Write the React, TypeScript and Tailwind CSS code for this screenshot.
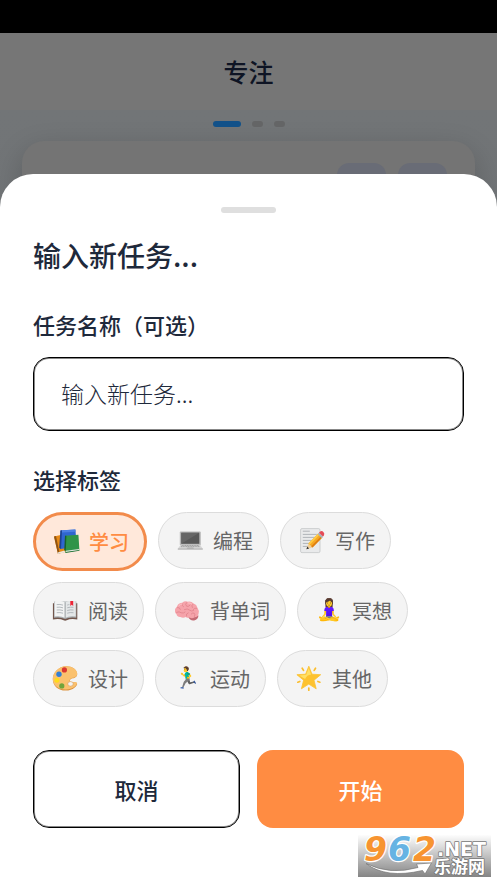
import React, { useState } from "react";

const BooksIcon = () => (
  <svg viewBox="0 0 27 27" className="size-[27px]" aria-hidden="true">
    <path d="M1 8.5 7.5 7l6 16.5L5 26z" fill="#e88a16" />
    <path d="M1 8.5 5 26l1.6-.6L3 8z" fill="#8f5312" />
    <path d="m4.6 24.4 7-1.8.4 1.6-7 1.8z" fill="#ece7de" />
    <path d="m7.4 2.4 15-.8 1.4 17L7.6 21z" fill="#2f66cf" />
    <path d="M7.4 2.4 9 2.3l-1 18.6-1.8-1z" fill="#1c418f" />
    <path d="m9 2.3 13.4-.7.2 2.2L9 4.6z" fill="#4c80e2" />
    <path d="m12 7.8 13.4-1 1 15.4-14 2z" fill="#2f9448" />
    <path d="m12 7.8 1.4-.1-.6 15.4-1.6-.9z" fill="#17602a" />
    <path d="m12.8 22.7 13.4-1.7.2 1.4-13.6 2.2z" fill="#e5e9e2" />
    <path d="m12.4 24 14-2.1v.8l-14 2.4z" fill="#1d7032" />
  </svg>
);

const LaptopIcon = () => (
  <svg viewBox="0 0 27 27" className="size-[27px]" aria-hidden="true">
    <rect x="2.8" y="4.4" width="21" height="14" rx="1" fill="#b7b7b7" />
    <rect x="4.3" y="5.8" width="18" height="11" fill="#585858" />
    <path d="M4.3 16.8V5.8h18z" fill="#666" />
    <path d="M3.6 17.8H23l2.8 4H.8z" fill="#d6d6d6" />
    <path d="M4.6 18.5h17.5M3.9 19.6h19" stroke="#8d8d8d" strokeWidth=".7" strokeDasharray="1.3 .4" />
    <path d="M10.4 20.4h6l.5 1.2H9.8z" fill="#aaa" />
    <path d="M.8 21.7h25v.7H.8z" fill="#858585" />
  </svg>
);

const MemoIcon = () => (
  <svg viewBox="0 0 27 27" className="size-[27px]" aria-hidden="true">
    <rect x="1.6" y="1.6" width="19.4" height="24" rx="1.4" fill="#e9eaeb" stroke="#c3c5c7" strokeWidth=".8" />
    <path d="M3.8 4.2h7M3.8 7.4h14M3.8 10.4h14M3.8 13.4h13M3.8 16.4h10M3.8 19.4h5" stroke="#a9aeb2" strokeWidth=".9" />
    <path d="m7.4 22.2 2-5.8 4.1 4.2z" fill="#f1cf9a" />
    <path d="m7.4 22.2.9-2.6 1.8 1.8z" fill="#333" />
    <path d="m9.4 16.4 9.8-9.9 4.1 4.1-9.8 10z" fill="#f7a823" />
    <path d="m9.4 16.4 9.8-9.9 1.3 1.3-9.8 10z" fill="#ffca43" />
    <path d="m12.2 19.3 9.8-10 1.3 1.3-9.8 10z" fill="#df7f12" />
    <path d="m18.6 7.1 1.4-1.4 4.1 4.1-1.4 1.4z" fill="#a6b4ba" />
    <path d="m20 5.7.9-.9q1.8-1.6 3.5.2t.4 3.7l-.9.9z" fill="#e54b57" />
  </svg>
);

const OpenBookIcon = () => (
  <svg viewBox="0 0 27 27" className="size-[27px]" aria-hidden="true">
    <path d="M.9 6.2h24.4v16.2q-7-1-10.5.8-1.7.9-3.2 0Q8 21.4.9 22.4z" fill="#72564c" />
    <path d="M2 4.5h22.3v16.2q-7-1-11.2 1.3Q9 19.7 2 20.7z" fill="#a8adb0" />
    <path d="M13.1 5.4Q9 3 2.6 4.2v15.3q6.5-1 10.5 1.6z" fill="#f2f3f3" />
    <path d="M13.1 5.4Q17 3 23.7 4.2v15.3q-6.5-1-10.6 1.6z" fill="#e4e7e8" />
    <path d="M13.1 5.4v15.8" stroke="#9a9fa2" strokeWidth="1" />
    <path d="M4.7 7.6q3.3-.5 6.3.5M4.7 10.3q3.3-.5 6.3.5M4.7 13q3.3-.5 6.3.5M4.7 15.7q3.3-.5 6.3.5M15.2 8.1q1.4-.5 2.2-.6M15.2 10.8q3-1 6.3-.5M15.2 13.5q3-1 6.3-.5M15.2 16.2q3-1 6.3-.5" fill="none" stroke="#a4abb0" strokeWidth=".8" />
    <path d="M18.3 4h2.9v5l-1.4-1.2-1.5 1.2z" fill="#ee2435" />
  </svg>
);

const BrainIcon = () => (
  <svg viewBox="0 0 27 27" className="size-[27px]" aria-hidden="true">
    <path d="M14 19.5q2 4.6 6.2 3.9 4-.6 4.3-4.8z" fill="#c46a74" />
    <path d="M1 14.5q-.4-3.2 2-5.1Q4.4 5.8 8.2 5.7q2.6-2 5.6-1 3.6-.6 5.8 1.9 3.2.9 3.9 4.3 2.1 2.7 1.1 5.6-.5 3.5-3.9 3.8-2.6 1.8-5.2.3-1.9.7-3.7-.7-2.6 1.5-5.4.1-3.2.2-3.9-2.7Q1 16.2 1 14.5z" fill="#f5a3aa" />
    <g fill="none" stroke="#df818a" strokeWidth=".8" strokeLinecap="round">
      <path d="M3.5 10.5q2.4-.5 2.9 2M8.2 6.5q-.8 2.4 1.3 3.3M12.5 5.6q-1.9 1.8.3 3.8 2.2.3 3.2-1.2M18.8 7.3q-1.9 1.2-.5 3.2M22.8 11.2q-2.5-.6-3.5 1.2M10.5 12.5q3-1.5 5.2.7 1.9 1.6 3.9.3M2.6 15.3q2.8-1.3 4.6.5 2.3.8 3.9-.7M12.4 19q-.7-2.5 1.8-3.2M20.5 19.5q1.2-2-.4-3.4-1.9-.4-2.9.9" />
    </g>
    <path d="M5 8.5q1.3-1.6 3-1.6M14.2 5.9q2.3-.2 3.4.9" fill="none" stroke="#ffc9cb" strokeWidth=".9" strokeLinecap="round" />
  </svg>
);

const PaletteIcon = () => (
  <svg viewBox="0 0 27 27" className="size-[27px]" aria-hidden="true">
    <path d="M14.5 1.2c5.5.1 10.3 3 10.7 7.5.2 3-2.3 4.2-4.3 4.6-2.6.5-3.8 2.3-2.4 3.6 1.9 1.3 5.3-.6 6.5 1.3 1.2 2.2-4.3 7.5-11.3 7.4C6.2 25.5.8 20.8.8 14.2S7 1.1 14.5 1.2z" fill="#db9340" />
    <path d="M14.5 1.2c5.5.1 10.3 3 10.7 7 .2 3-2.3 4.2-4.3 4.6-2.6.5-4.2 2.5-2.8 4.2 1.9 1.3 5.7-.9 6.7.8 1.2 2-4.3 6.9-11.1 6.8C6.2 24.5.8 20.1.8 13.8S7 1.1 14.5 1.2z" fill="#fac16e" />
    <ellipse cx="18.5" cy="18.9" rx="2.8" ry="2.3" fill="#f3f3f3" stroke="#d9923f" strokeWidth=".6" />
    <circle cx="12.4" cy="4.9" r="2.6" fill="#db3730" />
    <circle cx="7" cy="9.2" r="2.7" fill="#347ed2" />
    <circle cx="4.9" cy="15.3" r="2.5" fill="#ffdc1a" />
    <circle cx="9.8" cy="20.9" r="2.6" fill="#71a43b" />
  </svg>
);

const StarIcon = () => (
  <svg viewBox="0 0 27 27" className="size-[27px]" aria-hidden="true">
    <path d="m12.8 1.2 3.2 8 8.7.5-6.7 5.5 2.2 8.6-7.4-4.7-7.4 4.7 2.2-8.6L.9 9.7l8.7-.5z" fill="#fdc22f" stroke="#fdc22f" strokeWidth=".8" strokeLinejoin="round" />
    <path d="m12.8 3 2.3 6.6q-4.3.4-6 4.5L3.2 10.4l7-.6z" fill="#ffe066" />
    <g stroke="#fbbd2c" strokeWidth="1.7" strokeLinecap="round">
      <path d="m6.2 3.2 1.3 2.2M19.5 3.2l-1.3 2.2M1.8 17.2l2-.7M23.9 17.2l-2-.7M12.8 23v2.2" />
    </g>
  </svg>
);

const emojiStyle = "flex size-[27px] items-center justify-center font-['Noto_Color_Emoji',sans-serif] text-[21px] leading-none";

const TAGS: { name: string; icon: React.ReactNode }[] = [
  { name: "学习", icon: <BooksIcon /> },
  { name: "编程", icon: <LaptopIcon /> },
  { name: "写作", icon: <MemoIcon /> },
  { name: "阅读", icon: <OpenBookIcon /> },
  { name: "背单词", icon: <BrainIcon /> },
  { name: "冥想", icon: <span className={emojiStyle}>🧘‍♀️</span> },
  { name: "设计", icon: <PaletteIcon /> },
  { name: "运动", icon: <span className={emojiStyle}>🏃‍♂️</span> },
  { name: "其他", icon: <StarIcon /> },
];

const SiteLogo = () => (
  <svg viewBox="0 0 133 42" className="h-[42px] w-[133px] overflow-visible" role="img" aria-label="962.NET 乐游网">
    <defs>
      <linearGradient id="logoBg" x1="0" y1="0" x2="0" y2="1">
        <stop offset="0" stopColor="#fdfdfd" />
        <stop offset="1" stopColor="#858585" />
      </linearGradient>
    </defs>
    <rect width="133" height="42" fill="url(#logoBg)" />
    <path d="M8 28.5q24 12 52 4l-1.5-3.5 15-1-6.5 11-2.5-3.5Q28 44 8 28.5z" fill="#fff" stroke="#777" strokeWidth=".7" />
    <g fontFamily="DejaVu Sans" fontWeight="bold" fontStyle="italic" fontSize="33" stroke="#fff" strokeWidth="2.5" strokeLinejoin="round" paintOrder="stroke">
      <text x="6" y="26" fill="#f79431">9</text>
      <text x="30" y="26" fill="#66b3e3">6</text>
      <text x="55" y="26" fill="#f79431">2</text>
    </g>
    <g fill="#fff" stroke="#777" strokeWidth="1.5" strokeLinejoin="round" paintOrder="stroke" fontWeight="bold">
      <text x="79" y="21" fontFamily="DejaVu Sans" fontSize="19">.NET</text>
      <text x="76" y="38" fontFamily="Noto Sans CJK SC" fontSize="17">乐游网</text>
    </g>
  </svg>
);

export default function App() {
  const [selectedTag, setSelectedTag] = useState<string>("学习");
  const [taskName, setTaskName] = useState<string>("");

  return (
    <div className="relative flex min-h-screen flex-col bg-white font-['Noto_Sans_CJK_SC',sans-serif] text-[#1e293b]">
      <div className="h-[33px] bg-black" />

      <header className="flex h-[77px] justify-center bg-[#767676] pt-5">
        <h1 className="text-[25px] leading-9 font-medium text-[#0e1424]">专注</h1>
      </header>

      <main className="flex-1 overflow-hidden bg-linear-to-b from-[#727577] to-[#6b7076] px-[22px] pt-[11px]">
        <div className="flex items-center justify-center gap-[11px]">
          <span className="h-1.5 w-7 rounded-full bg-[#125189]" />
          <span className="h-1.5 w-[11px] rounded-full bg-[#646566]" />
          <span className="h-1.5 w-[11px] rounded-full bg-[#646566]" />
        </div>
        <div className="mt-3.5 flex h-80 justify-end gap-3 rounded-[22px] bg-[#747474] px-7 pt-[22px] shadow-[0_10px_30px_rgba(0,0,0,0.2)]">
          <span className="h-12 w-[49px] rounded-xl bg-[#696c76]" />
          <span className="h-12 w-[49px] rounded-xl bg-[#696c76]" />
        </div>
      </main>

      <section className="absolute inset-x-0 top-[174px] min-h-[709px] rounded-t-[33px] bg-white px-[33px] pt-[33px] pb-[55px]">
        <div className="mx-auto h-1.5 w-[55px] rounded-full bg-[#dfdfdf]" />
        <h2 className="mt-[22px] text-[28px] leading-10 font-medium">输入新任务...</h2>

        <label htmlFor="task-name" className="mt-[33px] block text-[22px] leading-8 font-medium">
          任务名称（可选）
        </label>
        <input
          id="task-name"
          value={taskName}
          onChange={(e) => setTaskName(e.target.value)}
          placeholder="输入新任务..."
          className="mt-[17px] block h-[74px] w-full rounded-2xl border border-black px-[27px] pb-0.5 text-[23px] font-light shadow-[inset_0_0_0_1px_#888] outline-none placeholder:text-[#1e293b]"
        />

        <h3 className="mt-8 text-[22px] leading-8 font-medium">选择标签</h3>
        <div className="mt-[17px] flex flex-wrap items-start gap-[11px]">
          {TAGS.map((tag) => (
            <button
              key={tag.name}
              type="button"
              onClick={() => setSelectedTag(tag.name)}
              className={
                selectedTag === tag.name
                  ? "flex h-[59px] items-center gap-[9px] rounded-full border-3 border-[#f28b4b] bg-[#ffe8da] pr-[15px] pl-[17px] text-[20px] font-medium text-[#ff8c42]"
                  : "flex h-[57px] items-center gap-[9px] rounded-full border border-[#dcdcdc] bg-[#f4f4f4] pr-[15px] pl-[18px] text-[20px] text-[#666]"
              }
            >
              {tag.icon}
              {tag.name}
            </button>
          ))}
        </div>

        <div className="mt-[43px] grid grid-cols-2 gap-[17px]">
          <button type="button" className="h-[78px] rounded-2xl border border-black text-[22px] font-medium shadow-[inset_0_0_0_1px_#888]">
            取消
          </button>
          <button type="button" className="h-[78px] rounded-2xl bg-[#ff8c42] text-[22px] font-medium text-white">
            开始
          </button>
        </div>
      </section>

      <div className="absolute right-1.5 top-[835px]">
        <SiteLogo />
      </div>
    </div>
  );
}
